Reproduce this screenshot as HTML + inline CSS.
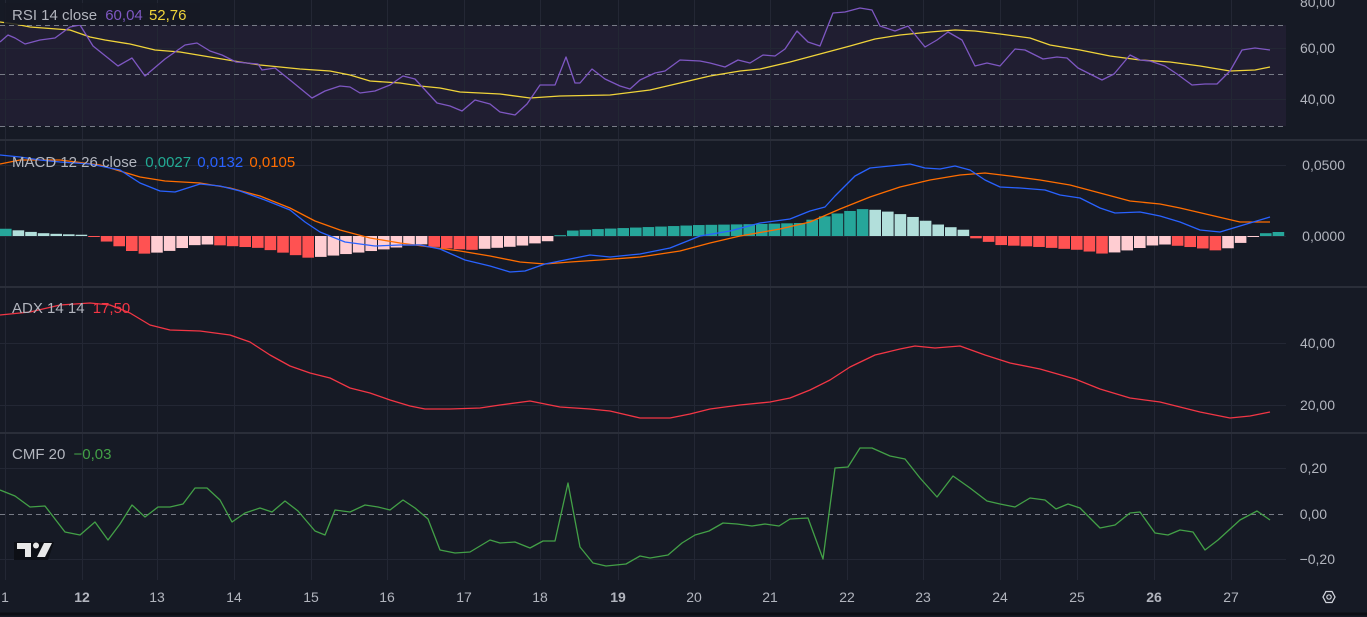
<!DOCTYPE html>
<html><head><meta charset="utf-8"><style>
body{margin:0;background:#161a25;width:1367px;height:617px;overflow:hidden;font-family:"Liberation Sans",sans-serif}
svg{display:block}
text{font-family:"Liberation Sans",sans-serif;font-size:14px}
.lg{font-size:15px}
</style></head><body>
<svg id="s" width="1367" height="617" xmlns="http://www.w3.org/2000/svg">
<rect width="1367" height="617" fill="#161a25"/>
<rect x="0" y="25" width="1286" height="101" fill="#201e31"/>
<g id="grid" stroke="#232734" stroke-width="1"></g>
<g stroke="#2a2e39" stroke-width="2">
<line x1="0" y1="140" x2="1367" y2="140"/><line x1="0" y1="287" x2="1367" y2="287"/><line x1="0" y1="433" x2="1367" y2="433"/>
</g>
<line x1="0" y1="614" x2="1367" y2="614" stroke="#0c0e14" stroke-width="3"/>
<g stroke="#777b86" stroke-dasharray="5,4" stroke-width="1">
<line x1="0" y1="25.5" x2="1286" y2="25.5"/><line x1="0" y1="74.5" x2="1286" y2="74.5"/><line x1="0" y1="126.5" x2="1286" y2="126.5"/><line x1="0" y1="514.5" x2="1286" y2="514.5"/>
</g>
<g id="hist"></g>
<g fill="none" stroke-width="1.3" stroke-linejoin="round">
<polyline stroke="#f0d43a" points="0,22 15,24 30,27 70,30 90,37 105,40 130,44 155,50 180,52 210,57 240,62 260,65 300,69 330,71 350,75 370,81 400,83 420,86 440,88 460,92 500,94 530,98 560,96 610,95 650,90 680,83 710,76 740,71 760,69 790,62 820,54 850,46 875,39 900,35 930,32 955,30 975,31 1000,34 1030,38 1050,45 1080,50 1110,56 1140,60 1170,62 1200,66 1230,71 1255,70 1270,67"/>
<polyline stroke="#7e57c2" points="0,42 8,35 15,38 25,44 40,40 55,38 70,27 80,25 93,46 118,66 132,58 145,76 165,59 185,45 197,43 210,51 222,55 236,62 258,64 262,70 275,68 290,80 312,98 325,91 340,86 350,87 360,93 375,91 390,85 403,76 415,79 437,103 450,106 462,111 475,100 490,104 500,112 515,115 527,104 540,85 555,85 566,57 575,83 580,83 592,69 605,79 620,86 630,89 640,80 655,73 665,71 680,60 700,61 710,63 725,67 738,60 750,63 763,55 775,56 785,49 797,31 808,42 820,46 833,13 845,12 860,8 872,10 880,26 895,31 908,26 925,47 937,40 948,32 962,40 975,66 987,63 1000,66 1015,49 1025,50 1043,59 1057,57 1067,58 1078,68 1090,74 1102,80 1114,74 1130,55 1140,60 1150,61 1165,66 1177,74 1192,85 1205,84 1217,84 1230,71 1242,50 1255,48 1270,50"/>
<polyline stroke="#ff6d00" points="0,164 20,160 60,160 100,165 140,177 165,181 200,183 230,188 260,196 290,208 315,221 340,230 370,238 400,243 430,247 460,251 490,256 520,262 545,264 570,262 600,260 640,257 680,251 710,243 740,236 780,229 810,222 840,209 870,197 900,187 930,180 960,175 985,173 1010,176 1040,180 1070,185 1100,193 1130,201 1160,204 1180,208 1210,215 1240,222 1270,222"/>
<polyline stroke="#2962ff" points="0,155 20,157 40,160 60,162 90,164 120,170 140,183 160,191 175,192 200,184 220,186 240,191 265,200 290,210 305,222 320,232 345,242 375,246 400,245 420,245 440,249 465,260 490,266 510,272 525,271 545,264 565,260 590,255 610,257 640,254 670,248 700,236 730,231 760,223 790,219 810,211 825,207 835,196 855,176 870,168 890,166 910,164 925,168 940,169 955,166 970,170 985,180 1000,187 1020,188 1045,190 1060,195 1080,198 1100,208 1115,213 1140,212 1160,216 1180,222 1200,230 1220,232 1240,226 1270,217"/>
<polyline stroke="#f23645" points="0,315 30,312 60,305 90,303 110,305 130,313 150,325 170,330 200,331 230,335 250,342 270,355 290,366 310,373 330,378 350,388 370,393 390,400 410,406 425,409 450,409 480,408 500,405 530,401 560,407 590,409 610,411 640,418 670,418 690,414 710,409 740,405 770,402 790,398 810,390 830,380 850,367 875,355 900,349 915,346 935,348 960,346 985,355 1010,363 1040,369 1075,379 1100,389 1130,398 1160,402 1180,407 1200,412 1230,418 1250,416 1270,412"/>
<polyline stroke="#43a047" points="0,490 15,496 30,507 45,506 65,532 80,535 95,522 108,540 120,524 132,505 145,517 158,507 170,507 183,504 195,488 207,488 220,500 232,522 245,513 260,508 272,512 285,501 298,511 315,531 325,535 335,510 350,512 365,505 378,507 390,510 403,500 415,508 428,519 440,550 455,553 470,552 490,540 500,543 515,542 530,548 543,541 555,541 568,483 580,547 593,563 606,566 626,564 640,556 650,558 668,555 682,543 695,535 709,531 723,523 737,524 752,526 765,524 779,526 790,519 808,518 823,559 835,468 848,467 860,448 872,448 890,456 905,459 920,478 937,497 953,476 970,488 987,501 1000,504 1015,507 1030,498 1045,500 1056,509 1068,504 1080,508 1100,528 1115,525 1130,513 1140,512 1155,533 1168,535 1180,530 1193,532 1205,550 1218,540 1240,520 1257,511 1270,520"/>
</g>
<rect x="4" y="3" width="196" height="22" fill="#161a25" opacity="0.85"/>
<text class="lg" x="12" y="20" fill="#b2b5be">RSI 14 close <tspan fill="#7e57c2" dx="4">60,04</tspan> <tspan fill="#f0d43a" dx="2">52,76</tspan></text>
<text class="lg" x="12" y="167" fill="#b2b5be">MACD 12 26 close <tspan fill="#22ab94" dx="4">0,0027</tspan> <tspan fill="#2962ff" dx="2">0,0132</tspan> <tspan fill="#ff6d00" dx="2">0,0105</tspan></text>
<text class="lg" x="12" y="313" fill="#b2b5be">ADX 14 14 <tspan fill="#f23645" dx="4">17,50</tspan></text>
<text class="lg" x="12" y="459" fill="#b2b5be">CMF 20 <tspan fill="#43a047" dx="4">−0,03</tspan></text>
<g fill="#b2b5be" text-anchor="end">
<text x="1335" y="7">80,00</text><text x="1335" y="53">60,00</text><text x="1335" y="104">40,00</text>
<text x="1345" y="170">0,0500</text><text x="1345" y="241">0,0000</text>
<text x="1335" y="348">40,00</text><text x="1335" y="410">20,00</text>
<text x="1327" y="473">0,20</text><text x="1327" y="519">0,00</text><text x="1335" y="564">−0,20</text>
</g>
<g id="tl" fill="#b2b5be" text-anchor="middle"></g>
<polygon points="1323,597 1326,591.5 1332,591.5 1335,597 1332,602.5 1326,602.5" fill="none" stroke="#d1d4dc" stroke-width="1.3"/>
<circle cx="1329" cy="597" r="2.2" fill="none" stroke="#d1d4dc" stroke-width="1.2"/>
<g>
<path d="M14,542 H54 L48,560 H14 Z" fill="#0c0e14" opacity="0.9"/>
<path d="M17,543 H31 V557 H25 V549 H17 Z" fill="#e8e8e8"/>
<circle cx="36" cy="545.5" r="3" fill="#e8e8e8"/>
<path d="M44,543 H52 L45,557 H37 Z" fill="#e8e8e8"/>
</g>
</svg>
<script>
var ns="http://www.w3.org/2000/svg",s=document.getElementById('s');
function el(p,t,a,txt){var e=document.createElementNS(ns,t);for(var k in a)e.setAttribute(k,a[k]);if(txt)e.textContent=txt;p.appendChild(e);return e;}
var xs=[5,82,157,234,311,387,464,540,618,694,770,847,923,1000,1077,1154,1231],lb=["1","12","13","14","15","16","17","18","19","20","21","22","23","24","25","26","27"];
var g=document.getElementById('grid'),tl=document.getElementById('tl');
xs.forEach(function(x,i){el(g,'line',{x1:x+.5,y1:0,x2:x+.5,y2:580});var t=el(tl,'text',{x:x,y:602},lb[i]);if(lb[i]=="12"||lb[i]=="19"||lb[i]=="26")t.setAttribute('font-weight','bold');});
[48,99,165,236,343,405,468,559].forEach(function(y){el(g,'line',{x1:0,y1:y+.5,x2:1286,y2:y+.5});});
var kp=[[0,8],[40,3],[60,2],[90,1],[100,-3],[140,-18],[165,-16],[200,-8],[260,-12],[310,-22],[330,-20],[380,-14],[420,-8],[440,-12],[470,-14],[520,-10],[555,-4],[565,5],[600,7],[700,11],[760,12],[800,13],[830,21],[860,27],[880,26],[910,20],[940,11],[965,6],[975,-2],[1000,-9],[1040,-11],[1080,-14],[1105,-18],[1130,-14],[1160,-8],[1200,-12],[1220,-15],[1235,-10],[1250,-2],[1270,4]];
function v(x){for(var i=1;i<kp.length;i++){if(x<=kp[i][0]){var a=kp[i-1],b=kp[i];return a[1]+(b[1]-a[1])*(x-a[0])/(b[0]-a[0]);}}return 4;}
var h=document.getElementById('hist'),prev=null;
for(var x=0;x<1276;x+=12.6){var val=v(x+6),c;if(prev===null)prev=val;
if(val>=0)c=val>=prev?'#26a69a':'#b2dfdb';else c=val<=prev?'#ff5252':'#ffcdd2';
var y=val>=0?236-val:236,hh=Math.max(1,Math.abs(val));el(h,'rect',{x:x,y:y,width:11.6,height:hh,fill:c});prev=val;}
</script>
</body></html>
